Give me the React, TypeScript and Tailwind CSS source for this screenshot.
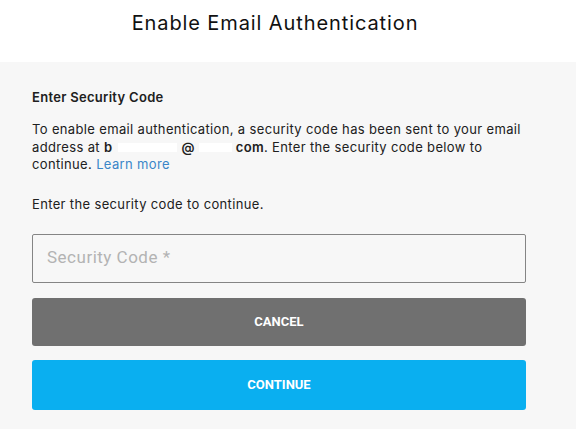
export default function App() {
  return (
    <div className="w-[576px] h-[429px] overflow-hidden bg-[#f7f7f7] font-['Inter','Roboto',sans-serif] text-[#202020]">
      <div className="h-[62px] bg-white flex justify-center pt-[9px] pr-[26px]">
        <h1 className="text-[20px] leading-[28px] tracking-[0.9px] text-[#111]">Enable Email Authentication</h1>
      </div>
      <div className="pl-8 pr-[50px] pt-[26px]">
        <p className="text-[13px] font-semibold leading-[18px] tracking-[0.3px]">Enter Security Code</p>
        <p className="mt-[15px] text-[13px] leading-[17.5px] tracking-[0.35px]">
          To enable email authentication, a security code has been sent to your email address at{" "}
          <b className="font-semibold">b</b>
          <span className="inline-block align-baseline w-[59px] h-[9px] bg-white ml-[6px] mr-[4px]" />
          <b className="font-semibold">@</b>
          <span className="inline-block align-baseline w-[33px] h-[9px] bg-white ml-[4px] mr-[4px]" />
          <b className="font-semibold">com</b>. Enter the security code below to continue.{" "}
          <a className="text-[#3a86c8]">Learn more</a>
        </p>
        <p className="mt-[21px] text-[13px] leading-[18px] tracking-[0.35px]">Enter the security code to continue.</p>
        <div className="mt-[21px] h-[49px] border border-[#858585] rounded-[2px] flex items-center px-[14px]">
          <span className="text-[17px] text-[#b3b3b3] font-['Roboto',sans-serif] tracking-[0.5px]">Security Code *</span>
        </div>
        <button className="mt-[15px] w-full h-[48px] rounded-[3px] bg-[#707070] text-white text-[13px] font-bold font-['Roboto',sans-serif]">
          CANCEL
        </button>
        <button className="mt-[14px] w-full h-[50px] rounded-[3px] bg-[#0aaff0] text-white text-[13px] font-bold font-['Roboto',sans-serif]">
          CONTINUE
        </button>
      </div>
    </div>
  );
}
